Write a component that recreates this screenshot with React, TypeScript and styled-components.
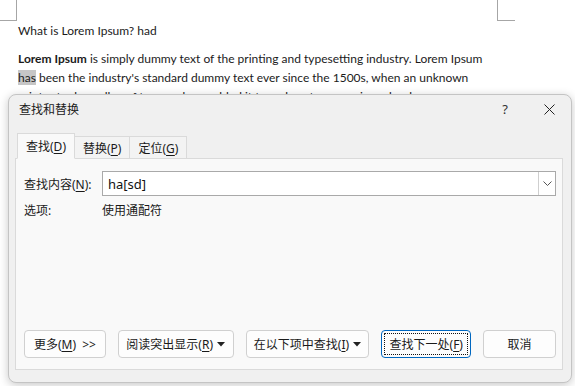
import React from "react";
import styled, { createGlobalStyle } from "styled-components";

const Global = createGlobalStyle`
  html, body { margin: 0; padding: 0; background: #ffffff; }
  body { width: 575px; height: 386px; overflow: hidden; position: relative; }
`;

const ui = `"Noto Sans", "Noto Sans CJK SC", sans-serif`;

const Page = styled.div`
  position: relative;
  width: 575px;
  height: 386px;
  background: #fff;
  overflow: hidden;
`;

const Doc = styled.div`
  padding: 21px 0 0 18px;
  width: 476px;
  font-family: Lato, "Open Sans", sans-serif;
  font-size: 12px;
  color: #1b1b1b;
  line-height: 19px;
`;

const Para = styled.p`
  margin: 0 0 9px 0;
`;

const Hit = styled.span`
  background: #c6c6c6;
`;

const CornerMark = styled.div<{ $side: "left" | "right" }>`
  position: absolute;
  top: 0;
  width: 16px;
  height: 20px;
  ${(p) =>
    p.$side === "left"
      ? `left: 0; border-right: 1px solid #a6a6a6; border-bottom: 1px solid #a6a6a6;`
      : `left: 497px; border-left: 1px solid #a6a6a6; border-bottom: 1px solid #a6a6a6; width: 17px;`}
`;

const Dialog = styled.div`
  position: absolute;
  left: 8px;
  top: 94px;
  width: 562px;
  height: 287px;
  background: #f0f0f0;
  border: 1px solid #c4c4c4;
  border-radius: 8px;
  box-shadow: 0 2px 10px rgba(0, 0, 0, 0.22);
  font-family: ${ui};
  font-size: 12px;
  color: #1a1a1a;
  display: flex;
  flex-direction: column;
`;

const TitleBar = styled.div`
  height: 28px;
  display: flex;
  align-items: center;
  padding: 0 0 0 10px;
`;

const Title = styled.div`
  flex: 1;
  font-size: 12px;
`;

const TitleBtn = styled.div`
  width: 44px;
  height: 28px;
  display: flex;
  align-items: center;
  justify-content: center;
  font-family: "Noto Sans", sans-serif;
  font-size: 13px;
  color: #333;
`;

const Body = styled.div`
  flex: 1;
  display: flex;
  flex-direction: column;
  padding: 10px 8px 12px 6px;
`;

const TabRow = styled.div`
  display: flex;
  align-items: flex-end;
  padding-left: 2px;
  height: 26px;
  position: relative;
  z-index: 1;
  margin-bottom: -1px;
`;

const Tab = styled.div<{ $active?: boolean }>`
  height: ${(p) => (p.$active ? "26px" : "23px")};
  box-sizing: border-box;
  padding: 0 8px;
  display: flex;
  align-items: center;
  white-space: nowrap;
  background: ${(p) => (p.$active ? "#f9f9f9" : "#f3f3f3")};
  border: 1px solid #dadada;
  border-bottom: ${(p) => (p.$active ? "1px solid #f9f9f9" : "1px solid #dadada")};
  margin-left: ${(p) => (p.$active ? "0" : "-1px")};
  position: relative;
  z-index: ${(p) => (p.$active ? 2 : 1)};
`;

const U = styled.span`
  text-decoration: underline;
  text-underline-offset: 2px;
`;

const Panel = styled.div`
  flex: 1;
  background: #f9f9f9;
  border: 1px solid #dadada;
  display: flex;
  flex-direction: column;
  padding: 12px 6px 11px 8px;
`;

const FieldRow = styled.div`
  display: flex;
  align-items: center;
  height: 25px;
`;

const Label = styled.div`
  width: 78px;
  flex-shrink: 0;
  white-space: nowrap;
`;

const Combo = styled.div`
  flex: 1;
  height: 25px;
  box-sizing: border-box;
  border: 1px solid #a9a9a9;
  background: #fff;
  display: flex;
  align-items: center;
`;

const ComboText = styled.div`
  flex: 1;
  padding-left: 5px;
  font-size: 13px;
  color: #111;
`;

const ComboBtn = styled.div`
  width: 16px;
  height: 23px;
  border-left: 1px solid #cfcfcf;
  display: flex;
  align-items: center;
  justify-content: center;
`;

const OptRow = styled.div`
  display: flex;
  align-items: center;
  margin-top: 2px;
  height: 24px;
`;

const Spacer = styled.div`
  flex: 1;
`;

const ButtonRow = styled.div`
  display: flex;
  gap: 12px;
  align-items: center;
`;

const Btn = styled.div<{ $w: number; $focus?: boolean }>`
  width: ${(p) => p.$w}px;
  height: 28px;
  box-sizing: border-box;
  background: #fdfdfd;
  border: 1px solid ${(p) => (p.$focus ? "#0067c0" : "#d0d0d0")};
  border-radius: 4px;
  display: flex;
  align-items: center;
  justify-content: center;
  position: relative;
  white-space: nowrap;
  gap: 4px;
  ${(p) =>
    p.$focus
      ? `&::after { content: ""; position: absolute; inset: 2px; border: 1px dotted #111; border-radius: 1px; }`
      : ""}
`;

const Caret = () => (
  <svg width="8" height="5" viewBox="0 0 8 5">
    <path d="M0 0 L8 0 L4 4.5 Z" fill="#222" />
  </svg>
);

export default function App() {
  return (
    <Page>
      <Global />
      <CornerMark $side="left" />
      <CornerMark $side="right" />
      <Doc>
        <Para>What is Lorem Ipsum? had</Para>
        <Para>
          <b>Lorem Ipsum</b> is simply dummy text of the printing and typesetting industry. Lorem Ipsum{" "}
          <Hit>has</Hit> been the industry's standard dummy text ever since the 1500s, when an unknown
          printer took a galley of type and scrambled it to make a type specimen book.
        </Para>
      </Doc>
      <Dialog>
        <TitleBar>
          <Title>查找和替换</Title>
          <TitleBtn>?</TitleBtn>
          <TitleBtn>
            <svg width="11" height="11" viewBox="0 0 11 11">
              <path d="M0.5 0.5 L10.5 10.5 M10.5 0.5 L0.5 10.5" stroke="#222" strokeWidth="1" />
            </svg>
          </TitleBtn>
        </TitleBar>
        <Body>
          <TabRow>
            <Tab $active>
              <span>
                查找(<U>D</U>)
              </span>
            </Tab>
            <Tab>
              <span>
                替换(<U>P</U>)
              </span>
            </Tab>
            <Tab>
              <span>
                定位(<U>G</U>)
              </span>
            </Tab>
          </TabRow>
          <Panel>
            <FieldRow>
              <Label>
                查找内容(<U>N</U>):
              </Label>
              <Combo>
                <ComboText>ha[sd]</ComboText>
                <ComboBtn>
                  <svg width="9" height="5" viewBox="0 0 9 5">
                    <path d="M0.5 0.5 L4.5 4.5 L8.5 0.5" stroke="#555" fill="none" strokeWidth="1" />
                  </svg>
                </ComboBtn>
              </Combo>
            </FieldRow>
            <OptRow>
              <Label>选项:</Label>
              <div>使用通配符</div>
            </OptRow>
            <Spacer />
            <ButtonRow>
              <Btn $w={82}>
                <span>
                  更多(<U>M</U>)&nbsp;&nbsp;&gt;&gt;
                </span>
              </Btn>
              <Btn $w={116}>
                <span>
                  阅读突出显示(<U>R</U>)
                </span>
                <Caret />
              </Btn>
              <Btn $w={124}>
                <span>
                  在以下项中查找(<U>I</U>)
                </span>
                <Caret />
              </Btn>
              <Btn $w={90} $focus>
                <span>
                  查找下一处(<U>F</U>)
                </span>
              </Btn>
              <Btn $w={73}>
                <span>取消</span>
              </Btn>
            </ButtonRow>
          </Panel>
        </Body>
      </Dialog>
    </Page>
  );
}
